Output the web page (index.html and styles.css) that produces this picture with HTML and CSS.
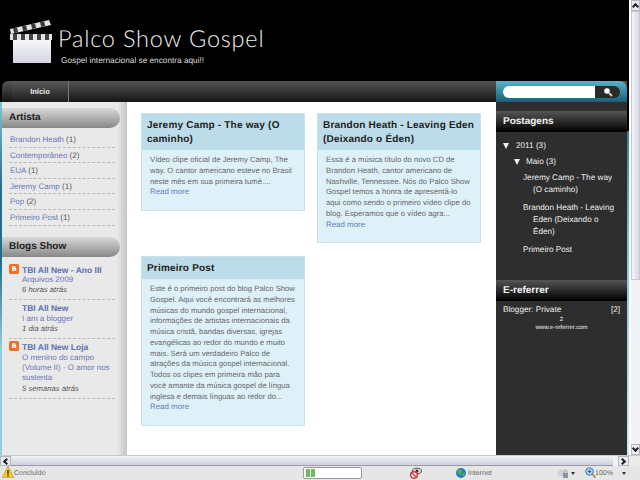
FILE: index.html
```html
<!DOCTYPE html>
<html lang="pt">
<head>
  <meta charset="UTF-8">
  <title>Palco Show Gospel</title>
  <link rel="stylesheet" href="styles.css">
</head>
<body>
  <div class="window">
    <div class="viewport">
      <div class="page">
        <header class="header">
          <svg class="clapper" width="42" height="44" viewBox="0 0 42 44">
            <defs>
              <linearGradient id="slate" x1="0" y1="0" x2="0" y2="1">
                <stop offset="0" stop-color="#f6f6f8"/>
                <stop offset="1" stop-color="#d4d4e4"/>
              </linearGradient>
            </defs>
            <polygon points="0,10 39,1 41,6 1,15" fill="#e4e4e4"/>
            <path d="M3 9.300l4-.9 1.200 5-4 .9zM12 7.200l4-.9 1.200 5-4 .9zM21 5.100l4-.9 1.200 5-4 .9zM30 3l4-.9 1.200 5-4 .9z" fill="#3a3a3a"/>
            <rect x="0" y="15" width="42" height="6" fill="#e4e4e4"/>
            <path d="M3 15h4v6h-4zM11 15h4v6h-4zM19 15h4v6h-4zM27 15h4v6h-4zM35 15h4v6h-4z" fill="#444"/>
            <rect x="3" y="21" width="38" height="23" fill="url(#slate)"/>
          </svg>
          <div class="brand">
            <h1 class="brand-title">Palco Show Gospel</h1>
            <p class="brand-sub">Gospel internacional se encontra aqui!!</p>
          </div>
        </header>

        <nav class="nav">
          <div class="nav-tabs"><a class="nav-tab">Início</a></div>
          <div class="search">
            <div class="search-input"></div>
            <div class="search-btn">
              <svg width="10" height="10" viewBox="0 0 10 10"><circle cx="4" cy="4" r="2.800" fill="#fff"/><path d="M6 6l3 3" stroke="#ccc" stroke-width="2"/></svg>
            </div>
          </div>
        </nav>

        <div class="columns">
          <aside class="left">
            <h2 class="pill">Artista</h2>
            <ul class="labels">
              <li><a>Brandon Heath</a> (1)</li>
              <li><a>Contemporâneo</a> (2)</li>
              <li><a>EUA</a> (1)</li>
              <li><a>Jeremy Camp</a> (1)</li>
              <li><a>Pop</a> (2)</li>
              <li><a>Primeiro Post</a> (1)</li>
            </ul>
            <h2 class="pill">Blogs Show</h2>
            <ul class="blogs">
              <li>
                <svg class="blogger" width="10" height="10" viewBox="0 0 10 10"><rect width="10" height="10" rx="1.500" fill="#f0702a"/><path d="M3 3.200c0-.6.4-1 1-1h1.300c.8 0 1.200.5 1.200 1.200v.6c.5 0 .8.300.8.800v1.100c0 .7-.5 1.100-1.200 1.100h-2.100c-.6 0-1-.4-1-1z" fill="#fff"/><path d="M4.200 3.700h1.200M4.200 5.800h2" stroke="#f0702a" stroke-width=".7"/></svg>
                <a class="blog-name">TBI All New - Ano III</a>
                <a class="blog-post">Arquivos 2009</a>
                <em>6 horas atrás</em>
              </li>
              <li>
                <a class="blog-name">TBI All New</a>
                <a class="blog-post">I am a blogger</a>
                <em>1 dia atrás</em>
              </li>
              <li>
                <svg class="blogger" width="10" height="10" viewBox="0 0 10 10"><rect width="10" height="10" rx="1.500" fill="#f0702a"/><path d="M3 3.200c0-.6.4-1 1-1h1.300c.8 0 1.200.5 1.200 1.200v.6c.5 0 .8.300.8.800v1.100c0 .7-.5 1.100-1.200 1.100h-2.100c-.6 0-1-.4-1-1z" fill="#fff"/><path d="M4.200 3.700h1.200M4.200 5.800h2" stroke="#f0702a" stroke-width=".7"/></svg>
                <a class="blog-name">TBI All New Loja</a>
                <a class="blog-post">O menino do campo (Volume II) - O amor nos sustenta</a>
                <em>5 semanas atrás</em>
              </li>
            </ul>
          </aside>

          <main class="main">
            <article class="post post-a">
              <h3 class="post-title">Jeremy Camp - The way (O caminho)</h3>
              <div class="post-body">
                <p>Vídeo clipe oficial de Jeremy Camp, The way. O cantor americano esteve no Brasil neste mês em sua primeira tumê....</p>
                <a>Read more</a>
              </div>
            </article>
            <article class="post post-b">
              <h3 class="post-title">Brandon Heath - Leaving Eden (Deixando o Éden)</h3>
              <div class="post-body">
                <p>Essa é a música título do novo CD de Brandon Heath, cantor americano de Nashville, Tennessee. Nós do Palco Show Gospel temos a honra de apresentá-lo aqui como sendo o primeiro vídeo clipe do blog. Esperamos que o vídeo agra...</p>
                <a>Read more</a>
              </div>
            </article>
            <article class="post post-c">
              <h3 class="post-title">Primeiro Post</h3>
              <div class="post-body">
                <p>Este é o primeiro post do blog Palco Show Gospel. Aqui você encontrará as melhores músicas do mundo gospel internacional, informações de artistas internacionais da música cristã, bandas diversas, igrejas evangélicas ao redor do mundo e muito mais. Será um verdadeiro Palco de atrações da música gospel internacional. Todos os clipes em primeira mão para você amante da música gospel de língua inglesa e demais línguas ao redor do...</p>
                <a>Read more</a>
              </div>
            </article>
          </main>

          <aside class="right">
            <h2 class="bar bar-first">Postagens</h2>
            <ul class="archive">
              <li class="year"><span class="tri"></span>2011 (3)</li>
              <li class="month"><span class="tri"></span>Maio (3)</li>
              <li class="entry">Jeremy Camp - The way (O caminho)</li>
              <li class="entry">Brandon Heath - Leaving Eden (Deixando o Éden)</li>
              <li class="entry">Primeiro Post</li>
            </ul>
            <h2 class="bar">E-referrer</h2>
            <div class="referrer">
              <div class="ref-row"><span>Blogger: Private</span><span>[2]</span></div>
              <div class="ref-num">2</div>
              <div class="ref-site">www.e-referrer.com</div>
            </div>
          </aside>
        </div>
      </div>

      <div class="edge"></div>

      <div class="vscroll">
        <div class="sb-btn"><span class="chev chev-up"></span></div>
        <div class="vthumb"></div>
        <div class="vtrack"></div>
        <div class="sb-btn"><span class="chev chev-down"></span></div>
      </div>
    </div>

    <div class="hscroll">
      <div class="sb-btn"><span class="chev chev-left"></span></div>
      <div class="hthumb"></div>
      <div class="htrack"></div>
      <div class="sb-btn"><span class="chev chev-right"></span></div>
      <div class="sb-corner"></div>
    </div>

    <footer class="status">
      <svg class="warn" width="12" height="12" viewBox="0 0 12 12"><polygon points="6,0 12,12 0,12" fill="#f2c83a" stroke="#a88a20" stroke-width="0.500"/><rect x="5.300" y="4" width="1.400" height="4.500" fill="#333"/><rect x="5.300" y="9.300" width="1.400" height="1.400" fill="#333"/></svg>
      <span class="status-text done">Concluído</span>
      <div class="progress"><i></i><i></i></div>
      <svg class="privacy" width="12" height="12" viewBox="0 0 12 12"><ellipse cx="7" cy="4" rx="4.500" ry="2.800" fill="#ddd" stroke="#555"/><circle cx="7" cy="4" r="1.500" fill="#333"/><circle cx="4" cy="8" r="3.300" fill="#fff" stroke="#cc3a3a" stroke-width="1.500"/><path d="M2 6l4 4" stroke="#cc3a3a" stroke-width="1.200"/></svg>
      <svg class="globe" width="10" height="10" viewBox="0 0 10 10"><circle cx="5" cy="5" r="5" fill="#2a7fb8"/><path d="M2 2c2-1 4 0 4 2s-2 3-3 2-2-2-1-4zM7 5l2 0-1 3-2 0z" fill="#54b04a"/></svg>
      <span class="status-text zone">Internet</span>
      <svg class="lock" width="14" height="12" viewBox="0 0 14 12"><circle cx="4" cy="6" r="3.500" fill="#cfd3d8"/><rect x="6" y="6" width="5" height="5" fill="#8d939a"/><path d="M7 6V4.500a1.500 1.500 0 0 1 3 0V6" fill="none" stroke="#8d939a"/></svg>
      <span class="caret caret-a"></span>
      <svg class="zoom" width="11" height="11" viewBox="0 0 11 11"><circle cx="4.500" cy="4.500" r="3.800" fill="#a9c8ea" stroke="#4a7fb5"/><path d="M3 4.500h3M4.500 3v3" stroke="#2c5f99"/><path d="M7.500 7.500l3 3" stroke="#a8742c" stroke-width="1.500"/></svg>
      <span class="status-text pct">100%</span>
      <span class="caret caret-b"></span>
    </footer>
  </div>
</body>
</html>
```

FILE: styles.css
```css
* {
  box-sizing: border-box;
}

html, body {
  margin: 0;
  padding: 0;
  overflow: hidden;
}

body {
  font-family: "Liberation Sans", Arial, sans-serif;
  font-size: 8px;
  text-rendering: geometricPrecision;
  background-color: #000;
}

ul {
  list-style: none;
  margin: 0;
  padding: 0;
}

h1, h2, h3, p {
  margin: 0;
}

.window {
  width: 640px;
  height: 480px;
  display: flex;
  flex-direction: column;
  overflow: hidden;
}

.viewport {
  height: 455px;
  display: flex;
  background-color: #fff;
}

.page {
  width: 627px;
  display: flex;
  flex-direction: column;
  background-color: #000;
}

.edge {
  width: 2px;
  background: linear-gradient(#000 0, #000 131px, #2f7f98 131px, #7fc4d6 240px, #cdeaf2 100%);
}

/* header */
.header {
  height: 81px;
  display: flex;
  padding: 19px 0 0 10px;
  background-color: #000;
}

.clapper {
  flex: none;
}

.brand {
  margin-left: 6px;
  padding-top: 7px;
}

.brand-title {
  font-family: Lato, sans-serif;
  font-weight: 300;
  font-size: 23.500px;
  line-height: 26px;
  letter-spacing: 0.800px;
  color: #f0f0f0;
}

.brand-sub {
  margin: 4px 0 0 3px;
  font-size: 8.250px;
  line-height: 10px;
  color: #dcdcdc;
}

/* nav */
.nav {
  height: 21px;
  display: flex;
  background: linear-gradient(#555, #151515);
  margin-left: 2px;
  border-radius: 6px 0 0 0;
}

.nav-tabs {
  flex: 1;
  padding-left: 10px;
}

.nav-tab {
  display: block;
  width: 57px;
  height: 21px;
  line-height: 21px;
  text-align: center;
  font-size: 7.500px;
  font-weight: bold;
  color: #eee;
  background: linear-gradient(#5a5a5a, #1c1c1c);
  border-right: 1px solid #777;
}

.search {
  width: 131px;
  padding: 5px 7px 0;
  display: flex;
  background: linear-gradient(#5ab3c6, #1a5f78);
  border-radius: 0 8px 0 0;
}

.search-input {
  width: 92px;
  height: 12px;
  background-color: #fff;
  border-radius: 6px 0 0 6px;
}

.search-btn {
  width: 25px;
  height: 12px;
  background-color: #2a2a2a;
  border-radius: 0 6px 6px 0;
  padding: 1px 0 0 8px;
}

/* columns */
.columns {
  flex: 1;
  display: flex;
  min-height: 0;
}

.left {
  width: 127px;
  padding-top: 6px;
  background: linear-gradient(90deg, #e9e9e9 0, #e9e9e9 115px, #bdbdbd 127px);
  border-left: 2px solid #7ec6da;
  border-image: linear-gradient(#7ec6da, #1d6f8a 25%, #1d6f8a 45%, #8fd0e2 70%) 1;
  color: #555;
}

.pill {
  width: 118px;
  height: 20px;
  line-height: 20px;
  padding-left: 7px;
  font-size: 10px;
  color: #222;
  background: linear-gradient(#d8d8d8, #888);
  border-radius: 0 10px 10px 0;
}

.labels {
  margin: 4px 0 11px 7px;
  width: 106px;
}

.labels li {
  height: 15.600px;
  padding-left: 1px;
  line-height: 15px;
  border-bottom: 1px dashed #bbb;
  white-space: nowrap;
}

.labels a,
.blogs a {
  color: #6a76b8;
}

.blogs {
  margin: 5px 0 0 7px;
  width: 106px;
}

.blogs li {
  position: relative;
  padding: 3px 0 4px 13px;
  line-height: 10.300px;
  border-bottom: 1px dashed #bbb;
}

.blogger {
  position: absolute;
  left: 0;
  top: 2px;
}

.blog-name {
  display: block;
  font-size: 8.500px;
  font-weight: bold;
  color: #5a70b0 !important;
}

.blog-post {
  display: block;
}

.blogs em {
  display: block;
  font-size: 7.700px;
  color: #555;
}

/* posts */
.main {
  width: 369px;
  position: relative;
  background-color: #fff;
}

.post {
  position: absolute;
  width: 164px;
  background-color: #def1f8;
  border: 1px solid #c9e3ec;
}

.post-a { left: 14px; top: 11px; height: 98px; }
.post-b { left: 190px; top: 11px; height: 130px; }
.post-c { left: 14px; top: 154px; height: 170px; }

.post-title {
  padding: 5px 5px 3px;
  font-size: 10px;
  line-height: 14px;
  letter-spacing: 0.200px;
  color: #222;
  background-color: #bbdce8;
}

.post-body {
  padding: 5px 8px;
  font-size: 7.700px;
  line-height: 10.750px;
  color: #666;
}

.post-body a {
  display: block;
  font-size: 7.900px;
  color: #5f7cc0;
}

/* right */
.right {
  width: 131px;
  background-color: #2e2e2e;
  color: #eee;
  font-size: 8.200px;
}

.bar {
  height: 21px;
  line-height: 21px;
  padding-left: 7px;
  font-size: 10px;
  color: #f2f2f2;
  background: linear-gradient(#555, #000);
}

.bar-first {
  margin-top: 9px;
}

.archive {
  padding: 8px 0 0 7px;
  line-height: 12px;
  height: 148px;
}

.year, .month {
  margin-bottom: 4px;
}

.year {
  padding-left: 13px;
  position: relative;
}

.month {
  padding-left: 23px;
  position: relative;
}

.tri {
  position: absolute;
  top: 3px;
  border-left: 3.500px solid transparent;
  border-right: 3.500px solid transparent;
  border-top: 6px solid #eee;
}

.year .tri { left: 0; }
.month .tri { left: 11px; }

.entry {
  margin: 0 0 6px 20px;
  padding-left: 10px;
  text-indent: -10px;
  width: 92px;
}

.referrer {
  padding: 4px 7px;
}

.ref-row {
  display: flex;
  justify-content: space-between;
}

.ref-num, .ref-site {
  text-align: center;
  font-size: 6px;
  line-height: 8px;
}

.ref-num {
  margin-top: 2px;
}

/* browser chrome */
.vscroll {
  width: 9px;
  margin-left: 2px;
  display: flex;
  flex-direction: column;
  background-color: #f2f3f6;
}

.vtrack {
  flex: 1;
}

.vthumb {
  height: 269px;
  background: linear-gradient(90deg, #f4f4f8, #d6d8e6);
  border: 1px solid #c6c8d4;
}

.sb-btn {
  width: 100%;
  height: 11px;
  flex: none;
  display: flex;
  align-items: center;
  justify-content: center;
  background: #e8eaf0;
  border: 1px solid #b5b7c0;
}

.chev {
  width: 5px;
  height: 5px;
  border-left: 2px solid #222;
  border-bottom: 2px solid #222;
}

.chev-up { transform: translateY(1px) rotate(135deg); }
.chev-down { transform: translateY(-1px) rotate(-45deg); }
.chev-left { transform: translateX(1px) rotate(45deg); }
.chev-right { transform: translateX(-1px) rotate(225deg); }

.hscroll {
  height: 11px;
  display: flex;
  background-color: #e4e5ec;
  border-top: 1px solid #c8c8d0;
}

.hscroll .sb-btn {
  width: 11px;
  height: 10px;
}

.hthumb {
  width: 602px;
  background: linear-gradient(#f2f2f6, #cfd1de);
  border-bottom: 1px solid #9a9aa2;
}

.htrack {
  width: 5px;
  background-color: #f2f3f6;
}

.sb-corner {
  flex: 1;
  background-color: #ebebeb;
}

.status {
  height: 14px;
  position: relative;
  background-color: #e6e6e6;
  color: #666;
  font-size: 7px;
}

.status > * {
  position: absolute;
}

.status-text {
  top: 3px;
  line-height: 10px;
}

.warn { left: 2px; top: 0; }
.done { left: 14px; }

.progress {
  left: 303px;
  top: 1px;
  width: 59px;
  height: 12px;
  padding: 1px 2px;
  display: flex;
  gap: 1px;
  background-color: #fff;
  border: 1px solid #999;
  border-radius: 2px;
}

.progress i {
  width: 4px;
  background-color: #6dbb5a;
}

.privacy { left: 410px; top: 1px; }
.globe { left: 456px; top: 2px; }
.zone { left: 468px; }
.lock { left: 557px; top: 1px; }
.zoom { left: 585px; top: 1px; }
.pct { left: 595px; }

.caret {
  top: 6px;
  border-left: 2px solid transparent;
  border-right: 2px solid transparent;
  border-top: 3px solid #333;
}

.caret-a { left: 571px; }
.caret-b { left: 622px; }
```
